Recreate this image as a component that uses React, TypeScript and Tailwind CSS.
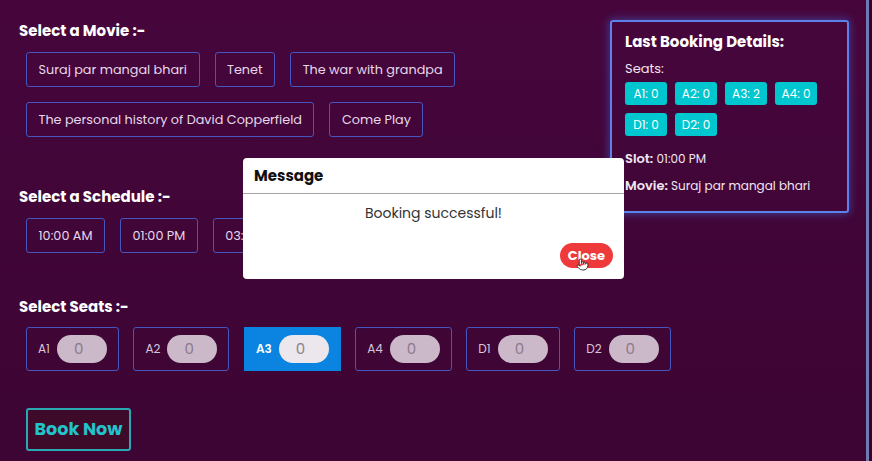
import { Pointer } from "lucide-react";

const movies = [
  ["Suraj par mangal bhari", "Tenet", "The war with grandpa"],
  ["The personal history of David Copperfield", "Come Play"],
];

const slots = ["10:00 AM", "01:00 PM", "03:00 PM"];

const seats = ["A1", "A2", "A3", "A4", "D1", "D2"];

const booked = [
  ["A1: 0", "A2: 0", "A3: 2", "A4: 0"],
  ["D1: 0", "D2: 0"],
];

function OptionButton({ label }: { label: string }) {
  return (
    <div className="flex h-[35px] items-center rounded-[3px] border-[1.5px] border-[#4656c0] px-[11.5px] text-[12.8px] text-[#e6d8ea]">
      {label}
    </div>
  );
}

export default function App() {
  return (
    <div
      className="h-[461px] w-[872px] overflow-hidden bg-[#35042e]"
      style={{ fontFamily: "Poppins, Inter, 'Noto Sans', sans-serif" }}
    >
      <div className="relative flex h-[461px] w-[869px] border-r-[3px] border-[#6f7cb4] bg-gradient-to-b from-[#46063c] to-[#3c0533]">
        {/* left column */}
        <div className="flex w-[610px] shrink-0 flex-col pl-[19px] pt-[22px]">
          <h2 className="text-[15px] font-bold leading-[18px] text-white">Select a Movie :-</h2>
          <div className="ml-[7px] mt-[12px] flex flex-col gap-[15px]">
            {movies.map((row, i) => (
              <div key={i} className="flex gap-[15px]">
                {row.map((m) => (
                  <OptionButton key={m} label={m} />
                ))}
              </div>
            ))}
          </div>

          <h2 className="mt-[51px] text-[15px] font-bold leading-[18px] text-white">Select a Schedule :-</h2>
          <div className="ml-[7px] mt-[12px] flex gap-[15px]">
            {slots.map((s) => (
              <OptionButton key={s} label={s} />
            ))}
          </div>

          <h2 className="mt-[45px] text-[15px] font-bold leading-[18px] text-white">Select Seats :-</h2>
          <div className="ml-[7px] mt-[11px] flex gap-[14.5px]">
            {seats.map((s) => {
              const active = s === "A3";
              return (
                <div
                  key={s}
                  className={
                    active
                      ? "flex h-[44px] shrink-0 items-center gap-[7px] bg-[#0a84e0] px-[12px]"
                      : "flex h-[44px] shrink-0 items-center gap-[7px] rounded-[3px] border-[1.5px] border-[#4656c0] px-[11px]"
                  }
                >
                  <span
                    className={
                      active
                        ? "text-[12px] font-semibold text-white"
                        : "text-[12px] text-[#d6c6dc]"
                    }
                  >
                    {s}
                  </span>
                  <div
                    className={
                      active
                        ? "flex h-[28px] w-[50px] items-center rounded-full bg-[#ebe7ec] pl-[17px] text-[15px] text-[#8b8190]"
                        : "flex h-[28px] w-[50px] items-center rounded-full bg-[#cbb9c9] pl-[17px] text-[15px] text-[#8b7a8c]"
                    }
                  >
                    0
                  </div>
                </div>
              );
            })}
          </div>

          <button className="ml-[7px] mt-[37px] h-[43px] w-[105px] rounded-[3px] border-2 border-[#2aa9b5] bg-[#3e0a2a] text-[17.5px] font-bold text-[#22c3c9]">
            Book Now
          </button>
        </div>

        {/* last booking panel */}
        <div className="mt-[20px] h-[193px] w-[239px] shrink-0 rounded-[3px] border-2 border-[#5b82ea] px-[13px] pt-[10px] shadow-[0_0_9px_1px_rgba(70,110,230,0.5)]">
          <h3 className="text-[15px] font-bold leading-[20px] text-white">Last Booking Details:</h3>
          <div className="mt-[8px] text-[13px] leading-[18px] text-[#f0e6f2]">Seats:</div>
          <div className="mt-[4px] flex flex-col gap-[8px]">
            {booked.map((row, i) => (
              <div key={i} className="flex gap-[8px]">
                {row.map((b) => (
                  <div
                    key={b}
                    className="flex h-[23px] w-[42px] items-center justify-center rounded-[3px] bg-[#00c6cf] text-[12px] text-white"
                  >
                    {b}
                  </div>
                ))}
              </div>
            ))}
          </div>
          <div className="mt-[15px] text-[12px] leading-[16px] text-[#f0e6f2]">
            <span className="text-[13px] font-semibold">Slot:</span> 01:00 PM
          </div>
          <div className="mt-[11px] text-[12px] leading-[16px] text-[#f0e6f2]">
            <span className="text-[13px] font-semibold">Movie:</span> Suraj par mangal bhari
          </div>
        </div>

        {/* message dialog */}
        <div className="absolute left-[243px] top-[158px] flex h-[121px] w-[381px] flex-col rounded-[4px] bg-white">
          <div className="flex h-[36px] items-center border-b-[1.5px] border-[#a5a5a5] px-[11px] pt-[1px] text-[15px] font-bold text-[#111]">
            Message
          </div>
          <div className="mt-[9px] text-center text-[14px] text-[#333]">Booking successful!</div>
          <div className="mt-auto flex justify-end pb-[11px] pr-[11px]">
            <div className="relative">
              <button className="h-[25px] w-[53px] rounded-full bg-[#ef3a3c] text-[13px] font-bold text-white">
                Close
              </button>
              <Pointer
                size={13}
                strokeWidth={1.6}
                className="absolute left-[16px] top-[15px] fill-white text-[#222]"
              />
            </div>
          </div>
        </div>
      </div>
    </div>
  );
}
